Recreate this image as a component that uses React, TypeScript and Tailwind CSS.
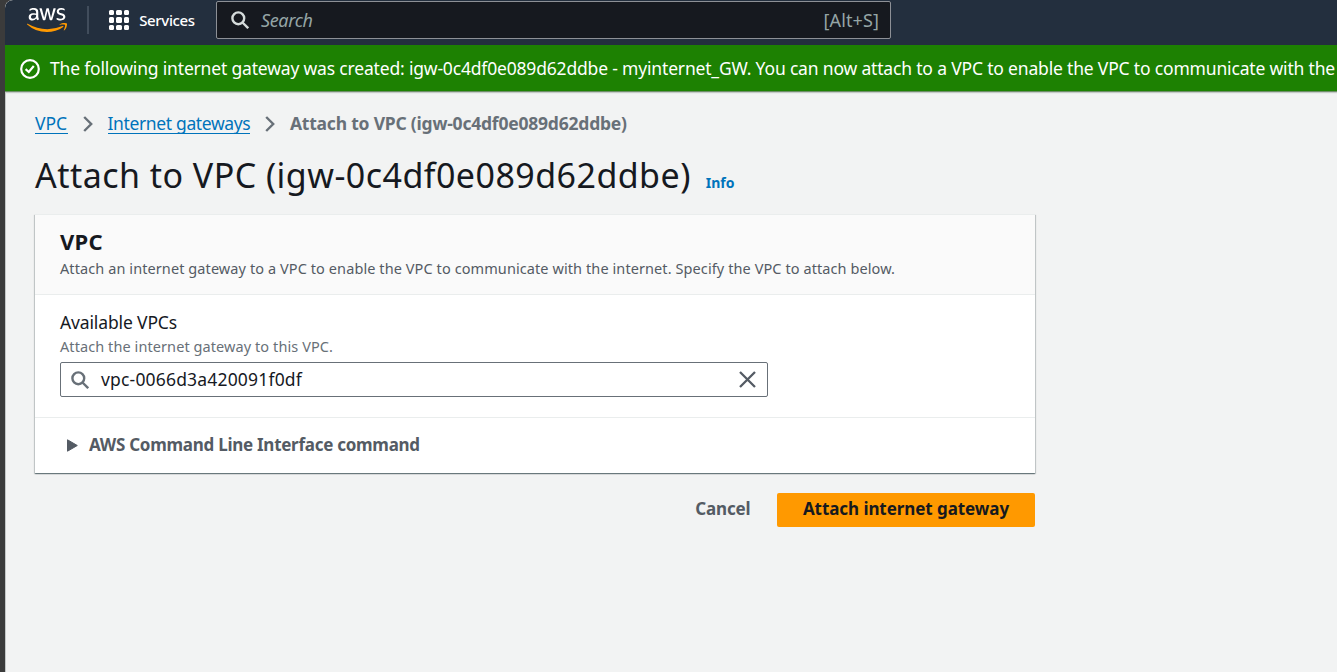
import { FaAws } from "react-icons/fa";

const GATEWAY_ID = "igw-0c4df0e089d62ddbe";

function SearchIcon({ className }: { className: string }) {
  return (
    <svg viewBox="0 0 18 18" fill="none" stroke="currentColor" strokeWidth="2.4" className={className}>
      <circle cx="7.3" cy="7.3" r="5.9" />
      <path d="M11.5 11.5L17.2 17.2" />
    </svg>
  );
}

function Logo() {
  return (
    <div className="h-8 w-10 shrink-0">
      <svg width="0" height="0" className="absolute">
        <defs>
          <linearGradient id="aws-fill" gradientUnits="userSpaceOnUse" x1="0" y1="0" x2="0" y2="512">
            <stop offset="0.585" stopColor="#ffffff" />
            <stop offset="0.585" stopColor="#ff9900" />
          </linearGradient>
        </defs>
      </svg>
      <FaAws className="h-8 w-10" fill="url(#aws-fill)" />
    </div>
  );
}

function GridIcon() {
  return (
    <div className="grid grid-cols-3 gap-[2px]">
      {Array.from({ length: 9 }, (_, i) => (
        <span key={i} className="size-[5.4px] rounded-[1.5px] bg-white" />
      ))}
    </div>
  );
}

function Chevron() {
  return (
    <svg viewBox="0 0 10 16" fill="none" stroke="#687078" strokeWidth="2.4" className="h-4 w-[10px]">
      <path d="M1.2 1L8.2 8L1.2 15" />
    </svg>
  );
}

function NavBar() {
  return (
    <header className="flex h-[45px] shrink-0 items-start rounded-tl-lg bg-[#232f3e] text-white">
      <div className="mt-[3.5px] ml-[22px]">
        <Logo />
      </div>
      <div className="mt-[6px] ml-[20px] h-7 w-[1.5px] bg-[#414d5c]" />
      <div className="mt-[10px] ml-[20.5px] flex">
        <GridIcon />
      </div>
      <span className="mt-[10px] ml-[10px] w-[76.8px] text-[15px] leading-[21px] font-medium tracking-[-0.35px]">Services</span>
      <div className="mt-px flex h-[38px] w-[675px] items-center rounded-[2px] border border-[#8d9096] bg-[#16191f] pr-[11px] pl-[14px]">
        <SearchIcon className="size-[18px] text-[#d5dbdb]" />
        <span className="mb-px ml-3 text-[18px] leading-6 tracking-[-0.35px] text-[#95a5a6] italic">Search</span>
        <span className="mb-px ml-auto text-[18px] leading-6 tracking-[0.1px] text-[#95a5a6]">[Alt+S]</span>
      </div>
    </header>
  );
}

function Banner() {
  return (
    <div className="flex h-[47px] shrink-0 items-center border-b border-[#6f8f68] bg-[#1d8102] pl-[15px] text-white shadow-[0_1px_1px_#c5cac8]">
      <svg viewBox="0 0 20 20" fill="none" stroke="currentColor" strokeWidth="2.2" className="mt-px size-5 shrink-0">
        <circle cx="10" cy="10" r="8.8" />
        <path d="M5.6 10.2L8.8 13L13.8 7" />
      </svg>
      <p className="mb-px ml-[10px] text-[17.5px] leading-6 tracking-[-0.177px] whitespace-nowrap">
        The following internet gateway was created: {GATEWAY_ID} - myinternet_GW. You can now attach to a VPC to enable the VPC to
        communicate with the
      </p>
    </div>
  );
}

function Breadcrumbs() {
  return (
    <nav className="flex h-5 items-center text-[17.5px] leading-5 text-[#0073bb]">
      <a className="w-[32.5px] border-b border-[#0073bb] tracking-[-0.1px]">VPC</a>
      <span className="mx-[15px] mt-[2px]">
        <Chevron />
      </span>
      <a className="border-b border-[#0073bb] tracking-[-0.36px]">Internet gateways</a>
      <span className="mt-[2px] mr-[14.5px] ml-[15px]">
        <Chevron />
      </span>
      <span className="font-bold tracking-[-0.21px] text-[#687078]">Attach to VPC ({GATEWAY_ID})</span>
    </nav>
  );
}

function VpcCard() {
  return (
    <section className="mt-[17px] h-[259px] w-[1000px] bg-white shadow-[0_1px_1px_0_rgba(0,28,36,0.4),1px_1px_1px_0_rgba(0,28,36,0.15),-1px_1px_1px_0_rgba(0,28,36,0.15)]">
      <div className="h-[81px] border-t border-b border-[#eaeded] bg-[#fafafa] px-[25px] pt-[12px]">
        <h2 className="text-[22px] leading-7 font-bold tracking-[0.3px]">VPC</h2>
        <p className="mt-[3px] text-[14.5px] leading-5 tracking-[0.088px] text-[#545b64]">
          Attach an internet gateway to a VPC to enable the VPC to communicate with the internet. Specify the VPC to attach below.
        </p>
      </div>
      <div className="h-[123px] border-b border-[#eaeded] px-[25px] pt-[15px]">
        <label className="block text-[17.5px] leading-6 tracking-[-0.14px]">Available VPCs</label>
        <p className="text-[14.5px] leading-6 tracking-[0.08px] text-[#687078]">Attach the internet gateway to this VPC.</p>
        <div className="mt-1 flex h-[35px] w-[708px] items-center rounded-[2px] border border-[#687078] pr-[11px] pl-[10px]">
          <SearchIcon className="size-[18px] text-[#687078]" />
          <span className="ml-3 text-[17.5px] tracking-[0.18px]">vpc-0066d3a420091f0df</span>
          <svg viewBox="0 0 17 17" fill="none" stroke="#545b64" strokeWidth="2.3" className="ml-auto size-[17px]">
            <path d="M1 1L16 16M16 1L1 16" />
          </svg>
        </div>
      </div>
      <div className="flex h-[55px] items-center pl-8 text-[#545b64]">
        <svg viewBox="0 0 11 13" fill="currentColor" stroke="currentColor" strokeLinejoin="round" className="h-[13px] w-[11px]">
          <path d="M0.5 0.8L10.3 6.5L0.5 12.2Z" />
        </svg>
        <span className="mb-px ml-[11px] text-[17px] leading-6 font-bold tracking-[-0.27px]">AWS Command Line Interface command</span>
      </div>
    </section>
  );
}

export default function App() {
  return (
    <div className="flex h-[672px] w-[1337px] overflow-hidden bg-[#3b3b3b] font-['Noto_Sans',sans-serif] text-[#16191f]">
      <div className="ml-[5px] flex min-w-0 flex-1 flex-col overflow-hidden rounded-tl-lg bg-[#f2f3f3]">
        <NavBar />
        <Banner />
        <main className="flex-1 border-l border-[#c4c7c7] pt-[21px] pl-[29px]">
          <Breadcrumbs />
          <div className="mt-[20px] mb-px flex h-11 items-baseline">
            <h1 className="text-[34px] leading-[44px] tracking-[0.46px]">Attach to VPC ({GATEWAY_ID})</h1>
            <a className="ml-[15px] text-[14px] font-bold text-[#0073bb]">Info</a>
          </div>
          <VpcCard />
          <div className="mt-[20px] flex w-[1000px] items-center justify-end">
            <button className="pb-[2px] text-[17px] leading-8 font-bold tracking-[-0.15px] text-[#545b64]">Cancel</button>
            <button className="ml-[26.5px] h-[34px] w-[258px] rounded-[2px] bg-[#ff9900] pb-[2px] text-[17px] leading-8 font-bold tracking-[-0.07px]">
              Attach internet gateway
            </button>
          </div>
        </main>
      </div>
    </div>
  );
}
